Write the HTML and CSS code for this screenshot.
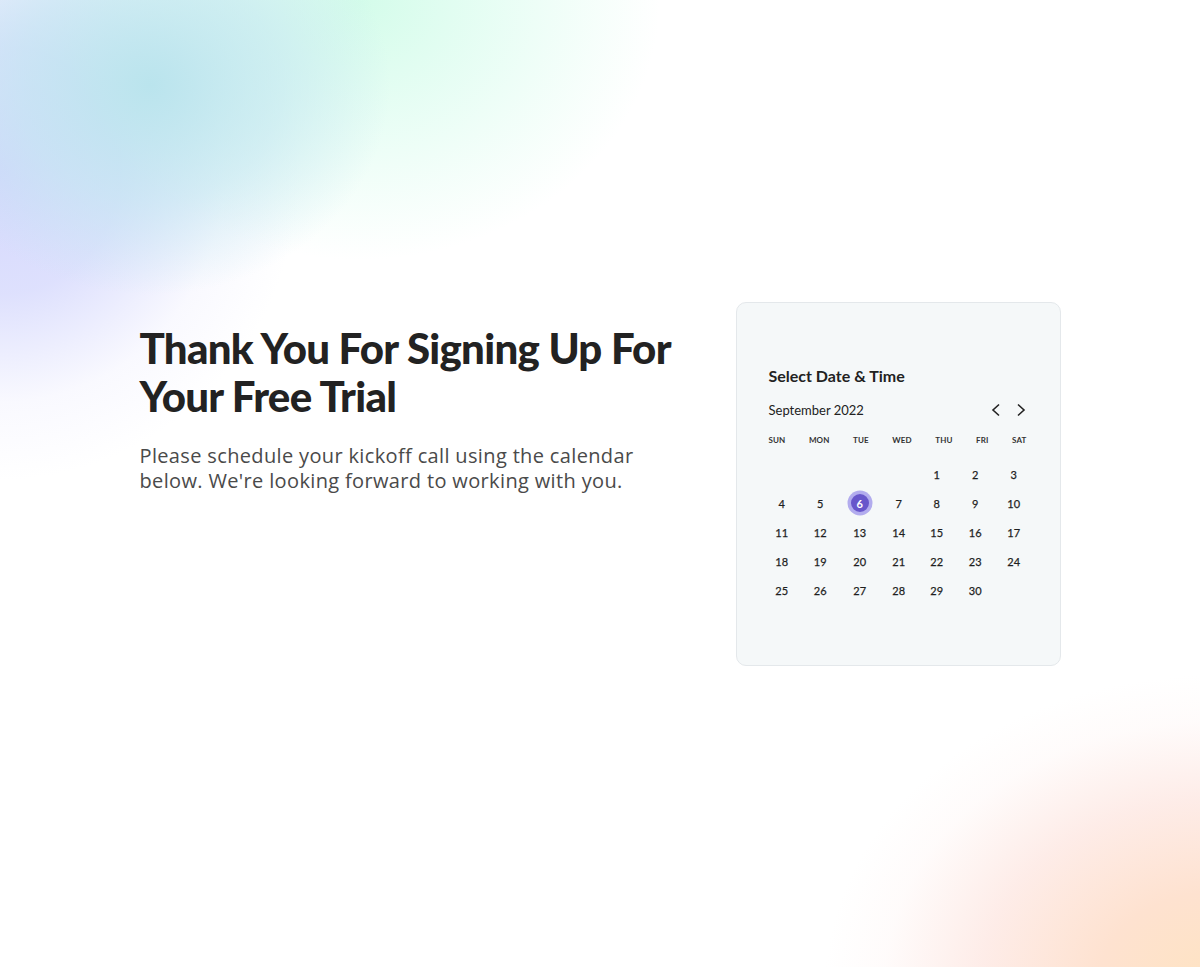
FILE: index.html
```html
<!DOCTYPE html>
<html lang="en">
<head>
<meta charset="utf-8">
<title>Thank You</title>
<link rel="stylesheet" href="styles.css">
</head>
<body>
<main class="page">
  <section class="intro">
    <h1 class="headline">Thank You For Signing Up For Your Free Trial</h1>
    <p class="lead">Please schedule your kickoff call using the calendar below. We're looking forward to working with you.</p>
  </section>
  <section class="card">
    <h2 class="card-title">Select Date &amp; Time</h2>
    <div class="month-row">
      <span class="month">September 2022</span>
      <div class="nav">
        <svg class="chev" width="12" height="14" viewBox="0 0 12 14"><path d="M9 1.5 L3 7 L9 12.5" fill="none" stroke="#222" stroke-width="1.6"/></svg>
        <svg class="chev" width="12" height="14" viewBox="0 0 12 14"><path d="M3 1.5 L9 7 L3 12.5" fill="none" stroke="#222" stroke-width="1.6"/></svg>
      </div>
    </div>
    <div class="weekdays">
      <span>SUN</span><span>MON</span><span>TUE</span><span>WED</span><span>THU</span><span>FRI</span><span>SAT</span>
    </div>
    <div class="days">
      <span></span><span></span><span></span><span></span>
      <span>1</span><span>2</span><span>3</span>
      <span>4</span><span>5</span><span class="sel"><b>6</b></span><span>7</span><span>8</span><span>9</span><span>10</span>
      <span>11</span><span>12</span><span>13</span><span>14</span><span>15</span><span>16</span><span>17</span>
      <span>18</span><span>19</span><span>20</span><span>21</span><span>22</span><span>23</span><span>24</span>
      <span>25</span><span>26</span><span>27</span><span>28</span><span>29</span><span>30</span><span></span>
    </div>
  </section>
</main>
</body>
</html>
```

FILE: styles.css
```css
* { box-sizing: border-box; }
html, body { margin: 0; padding: 0; }
body {
  min-height: 967px;
  background-color: #ffffff;
  background-image:
    radial-gradient(ellipse 390px 310px at 1215px 985px, rgba(254,227,194,1) 0%, rgba(254,226,208,1) 30%, rgba(253,228,222,0.7) 60%, rgba(254,240,238,0.25) 85%, rgba(255,255,255,0) 100%),
    radial-gradient(ellipse 240px 210px at 150px 85px, rgba(186,228,237,1) 0%, rgba(192,230,240,0.6) 55%, rgba(255,255,255,0) 100%),
    radial-gradient(ellipse 300px 260px at 360px 0px, rgba(212,252,234,1) 0%, rgba(222,253,240,0.65) 50%, rgba(255,255,255,0) 100%),
    radial-gradient(ellipse 300px 310px at 0px 170px, rgba(212,215,253,1) 0%, rgba(216,219,253,0.85) 40%, rgba(238,238,254,0.35) 75%, rgba(255,255,255,0) 100%);
  background-repeat: no-repeat;
  font-family: "Lato", "Liberation Sans", sans-serif;
  color: #222;
}
.page {
  min-height: 967px;
  display: flex;
  align-items: center;
  justify-content: center;
  gap: 56px;
}
.intro {
  width: 540px;
  margin-top: -150px;
}
.headline {
  margin: 0;
  font-family: "Lato", sans-serif;
  font-weight: 900;
  font-size: 42px;
  line-height: 48px;
  letter-spacing: -0.7px;
  color: #222222;
}
.lead {
  margin: 23px 0 0;
  font-family: "Open Sans", sans-serif;
  font-size: 20px;
  line-height: 25px;
  letter-spacing: 0.35px;
  color: #4a4a4a;
}
.card {
  width: 325px;
  height: 364px;
  background: #f5f8f9;
  border: 1px solid #e4e8eb;
  border-radius: 10px;
  padding: 63px 33px 0 32px;
}
.card-title {
  margin: 0;
  font-size: 16px;
  line-height: 20px;
  font-weight: 700;
  color: #222;
}
.month-row {
  margin-top: 14px;
  height: 20px;
  display: flex;
  align-items: center;
  justify-content: space-between;
}
.month { font-size: 13px; color: #222; }
.nav { display: flex; gap: 13px; align-items: center; }
.chev { display: block; }
.weekdays {
  margin-top: 14px;
  display: flex;
  justify-content: space-between;
  font-size: 8px;
  line-height: 12px;
  font-weight: 700;
  color: #333;
  letter-spacing: 0.1px;
}
.days {
  margin: 14px 0 0 -6px;
  display: grid;
  grid-template-columns: 38.5px 38.5px 40.5px 37.5px 38.5px 38.5px 38.5px;
  grid-auto-rows: 29px;
  font-size: 11px;
  font-weight: 400;
  color: #1f1f1f;
  -webkit-text-stroke: 0.25px #1f1f1f;
}
.days span {
  display: flex;
  align-items: center;
  justify-content: center;
}
.days .sel b {
  width: 18px;
  height: 18px;
  border-radius: 50%;
  background: #6756cb;
  color: #fff;
  -webkit-text-stroke: 0;
  display: flex;
  align-items: center;
  justify-content: center;
  box-shadow: 0 0 0 3.5px #b2acee;
  font-weight: 700;
}
```
